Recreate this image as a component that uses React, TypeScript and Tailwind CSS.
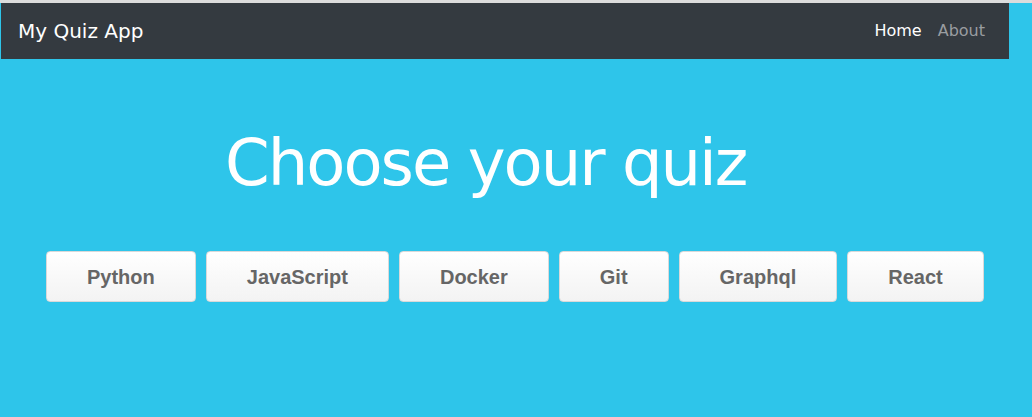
const quizzes = ["Python", "JavaScript", "Docker", "Git", "Graphql", "React"];

const App = () => {
    return (
        <div className="w-[1032px] h-[417px] bg-[#2ec5ea] overflow-hidden font-['DejaVu_Sans',sans-serif]">
            <div className="h-[3px] bg-[#dcdcdc]" />
            <div className="pl-[1px]">
                <nav className="w-[1008px] h-14 bg-[#343a40] flex items-center justify-between pl-[17px] pr-4">
                    <span className="text-white text-[20px] leading-none">My Quiz App</span>
                    <div className="flex items-center">
                        <a className="px-2 text-white text-base leading-none">Home</a>
                        <a className="px-2 text-[#9a9da0] text-base leading-none">About</a>
                    </div>
                </nav>
            </div>
            <h1 className="ml-[225px] mt-[72px] text-white text-[64px] leading-none tracking-[-2px] font-normal">Choose your quiz</h1>
            <div className="mt-[56px] ml-[46px] flex gap-[10px]">
                {quizzes.map((q) => (
                    <button
                        key={q}
                        className="h-[51px] px-10 border border-[#d9d9d9] rounded-[4px] bg-gradient-to-b from-white to-[#f3f3f3] text-[#666666] text-[20px] font-bold font-['Liberation_Sans',Arial,sans-serif]"
                    >
                        {q}
                    </button>
                ))}
            </div>
        </div>
    )
}

export default App
